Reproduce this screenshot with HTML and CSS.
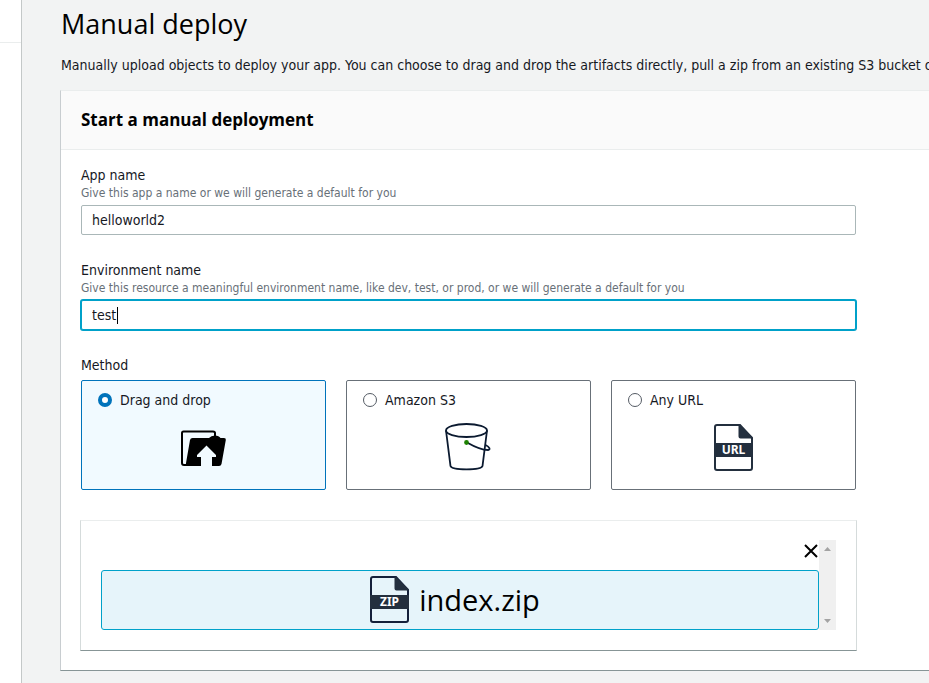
FILE: index.html
```html
<!DOCTYPE html>
<html lang="en">
<head>
<meta charset="utf-8">
<title>Manual deploy</title>
<link rel="stylesheet" href="styles.css">
</head>
<body>
<div class="shell">
  <aside class="sidebar"><div class="sidebar-head"></div></aside>
  <main class="main">
    <h1 class="title">Manual deploy</h1>
    <p class="intro">Manually upload objects to deploy your app. You can choose to drag and drop the artifacts directly, pull a zip from an existing S3 bucket or</p>
    <form class="card">
      <header class="card-head"><h2>Start a manual deployment</h2></header>
      <div class="card-body">
        <div class="field">
          <label class="label" for="app">App name</label>
          <span class="hint" id="app-hint">Give this app a name or we will generate a default for you</span>
          <input class="input" id="app" type="text" value="helloworld2" aria-describedby="app-hint">
        </div>
        <div class="field">
          <label class="label" for="env">Environment name</label>
          <span class="hint" id="env-hint">Give this resource a meaningful environment name, like dev, test, or prod, or we will generate a default for you</span>
          <div class="input-wrap">
            <input class="input input-active" id="env" type="text" value="test" aria-describedby="env-hint">
            <span class="caret"></span>
          </div>
        </div>
        <fieldset class="methods">
          <legend class="label">Method</legend>
          <div class="tiles">
            <label class="tile tile-selected">
              <span class="tile-head"><input type="radio" name="method" checked>Drag and drop</span>
              <svg class="icon" viewBox="2 -1 48 48" aria-hidden="true">
                <path d="M8 40H6Q4 40 4 38V8Q4 6.500 5.500 6.500H35Q37 6.500 37 8V13" fill="none" stroke="#000" stroke-width="2"/>
                <path d="M14.500 13H31Q33 10.500 37 10.500Q41 10.500 42.500 13H46Q48.200 13 47.800 15L43.500 39Q43 41 41 41H34V32H38V30L28.500 20.500L19 30V32H23V41H7.500L12 15Q12.500 13 14.500 13Z"/>
              </svg>
            </label>
            <label class="tile">
              <span class="tile-head"><input type="radio" name="method">Amazon S3</span>
              <svg class="icon" viewBox="1 1 48 48" aria-hidden="true" fill="none" stroke="#0b1a30" stroke-width="1.800">
                <ellipse cx="22.500" cy="7.500" rx="20.500" ry="6.500"/>
                <path d="M2 7.500L6.500 43C8 47.500 37 47.500 38.500 43L43 7.500"/>
                <path d="M23 19.500C30 23.500 39 27 44 27C47 26.500 45.500 24 41.500 22"/>
                <circle cx="22.500" cy="19.500" r="1.500" fill="#1d8102" stroke="#1d8102"/>
              </svg>
            </label>
            <label class="tile">
              <span class="tile-head"><input type="radio" name="method">Any URL</span>
              <svg class="icon" viewBox="0 0 48 48" aria-hidden="true">
                <path d="M7 1H30L42 14V44Q42 46 40 46H7Q5 46 5 44V3Q5 1 7 1Z" fill="#fff" stroke="#232f3e" stroke-width="2"/>
                <path d="M28.500 1V12.500Q28.500 14.500 30.500 14.500H42.500V13L30 1ZM4 19H43V33H4Z" fill="#232f3e"/>
                <text class="file-type" x="23.500" y="30">URL</text>
              </svg>
            </label>
          </div>
        </fieldset>
        <section class="drop">
          <div class="drop-view">
            <div class="drop-list">
              <button class="remove" type="button" aria-label="Remove file">
                <svg viewBox="0 0 14 14" aria-hidden="true"><path d="M1 1L13 13M13 1L1 13" stroke="#000" stroke-width="2"/></svg>
              </button>
              <div class="file">
                <svg class="icon" viewBox="0 0 48 48" aria-hidden="true">
                  <path d="M7 1H30L42 14V44Q42 46 40 46H7Q5 46 5 44V3Q5 1 7 1Z" fill="#e6f4fa" stroke="#14203a" stroke-width="2"/>
                  <path d="M28.500 1V12.500Q28.500 14.500 30.500 14.500H42.500V13L30 1ZM4 19H43V33H4Z" fill="#232f3e"/>
                  <text class="file-type" x="23.500" y="30">ZIP</text>
                </svg>
                <span>index.zip</span>
              </div>
            </div>
            <div class="scroller" aria-hidden="true">
              <svg viewBox="0 0 7 4"><path d="M0 4L3.500 0L7 4Z"/></svg>
              <svg viewBox="0 0 7 4"><path d="M0 0L3.500 4L7 0Z"/></svg>
            </div>
          </div>
        </section>
      </div>
    </form>
  </main>
</div>
</body>
</html>
```
FILE: styles.css
```css
* { box-sizing: border-box; }
body {
  margin: 0;
  background: #f2f3f3;
  color: #16191f;
  font: 14px/20px "DejaVu Sans Condensed", "Noto Sans", sans-serif;
  overflow: hidden;
}
.shell { display: flex; min-height: 100vh; }
.sidebar { flex: none; width: 22px; background: #fff; border-right: 1px solid #c4c8c8; }
.sidebar-head { height: 43px; border-bottom: 1px solid #eaeded; }
.main { flex: 1; min-width: 0; padding: 6px 0 12px 38px; }
.title, .card-head, .file { font-family: "Open Sans", "Noto Sans", sans-serif; }
.title { margin: 0; padding-left: 1px; font-size: 27px; line-height: 36px; font-weight: 400; color: #000; }
.intro { margin: 13px 0 15px; padding-left: 1px; white-space: nowrap; }
.card {
  background: #fff;
  border: 1px solid #c8cdd0;
  border-top-color: #eaeded;
  border-bottom-color: #879596;
  border-right: 0;
  margin: 0;
}
.card-head { padding: 17px 20px; background: #fafafa; border-bottom: 1px solid #eaeded; }
.card-head h2 { margin: 0; font-size: 17px; line-height: 24px; font-weight: 700; color: #000; }
.card-body { padding: 15px 20px 19px; max-width: 815px; }
.field { display: flex; flex-direction: column; margin-bottom: 25px; }
.label { line-height: 20px; padding: 0; }
.hint { font-size: 12px; line-height: 16px; color: #687078; margin-bottom: 4px; }
.input {
  width: 100%;
  height: 30px;
  padding: 0 10px;
  border: 1px solid #aab7b8;
  border-radius: 2px;
  background: #fff;
  color: #16191f;
  font: inherit;
}
.input-wrap { position: relative; }
.input-active { border-color: #00a1c9; box-shadow: 0 0 0 1px #00a1c9; outline: 0; }
.caret { position: absolute; left: 36px; top: 7px; width: 1px; height: 17px; background: #000; }
.methods { border: 0; margin: 0 0 30px; padding: 0; min-width: 0; }
.tiles { display: grid; grid-template-columns: repeat(3, 1fr); gap: 20px; margin-top: 5px; }
.tile {
  display: flex;
  flex-direction: column;
  align-items: center;
  gap: 14px;
  height: 110px;
  padding: 9px 16px;
  border: 1px solid #687078;
  border-radius: 2px;
}
.tile-selected { border-color: #0073bb; background: #f1faff; }
.tile-head { display: flex; align-items: center; gap: 8px; align-self: stretch; }
.tile input {
  appearance: none;
  width: 14px;
  height: 14px;
  margin: 0;
  border: 1px solid #545b64;
  border-radius: 50%;
  background: #fff;
}
.tile input:checked { border: 4px solid #0073bb; }
.icon { flex: none; width: 48px; height: 48px; overflow: visible; }
.file-type { font: 700 12px "Noto Sans", sans-serif; fill: #fff; text-anchor: middle; }
.drop {
  margin: 0 -1px;
  padding: 19px 20px 20px;
  border: 1px solid #d5dbdb;
  border-top-color: #eaeded;
  border-bottom-color: #879596;
}
.drop-view { display: flex; }
.drop-list { flex: 1; }
.remove { display: block; margin: 4px 1px 12px auto; padding: 0; border: 0; background: none; width: 14px; height: 14px; }
.remove svg { display: block; }
.file {
  display: flex;
  align-items: center;
  justify-content: center;
  gap: 5px;
  height: 60px;
  padding-right: 14px;
  border: 1px solid #00a1c9;
  border-radius: 3px;
  background: #e6f4fa;
  color: #000;
  font-size: 29px;
  line-height: 36px;
}
.scroller {
  display: flex;
  flex-direction: column;
  justify-content: space-between;
  align-items: center;
  width: 17px;
  padding: 7px 0;
  background: #f0f0f0;
  fill: #a3a3a3;
}
.scroller svg { width: 7px; height: 4px; }
```
